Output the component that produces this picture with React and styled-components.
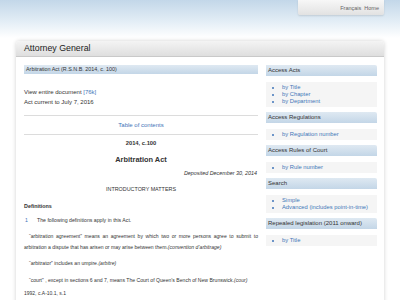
import React from 'react';
import styled, {createGlobalStyle} from 'styled-components';

const Colors = {
    text: '#333',
    link: '#3f75b8',
    rule: '#dcdcdc',
    barTop: '#dfe9f2',
    barBottom: '#c3d6e7',
};

const GlobalStyle = createGlobalStyle`
    html, body {
        margin: 0;
        padding: 0;
    }
    body {
        font-family: "Liberation Sans", Arial, sans-serif;
        color: ${Colors.text};
        background: linear-gradient(#c3d7e9 0, #e4eef6 22px, #ffffff 38px) no-repeat, #fff;
    }
`;

const sidebar = [
    {title: 'Access Acts', links: ['by Title', 'by Chapter', 'by Department']},
    {title: 'Access Regulations', links: ['by Regulation number']},
    {title: 'Access Rules of Court', links: ['by Rule number']},
    {title: 'Search', links: ['Simple', 'Advanced (includes point-in-time)']},
    {title: 'Repealed legislation (2011 onward)', links: ['by Title']},
];

export default function App() {
    return (
        <Page>
            <GlobalStyle />
            <TopBar>
                <LangTab>
                    <TabLink>Français</TabLink>
                    <TabLink>Home</TabLink>
                </LangTab>
            </TopBar>
            <Panel>
                <PanelHeader>Attorney General</PanelHeader>
                <PanelBody>
                    <Main>
                        <Bar>Arbitration Act (R.S.N.B. 2014, c. 100)</Bar>
                        <Meta>
                            <div>View entire document <Link>[76k]</Link></div>
                            <div>Act current to July 7, 2016</div>
                        </Meta>
                        <Toc><Link>Table of contents</Link></Toc>
                        <Chapter>2014, c.100</Chapter>
                        <ActTitle>Arbitration Act</ActTitle>
                        <Deposited>Deposited December 30, 2014</Deposited>
                        <Part>INTRODUCTORY MATTERS</Part>
                        <Heading>Definitions</Heading>
                        <Section><Num>1</Num>The following definitions apply in this Act.</Section>
                        <Para>“arbitration agreement” means an agreement by which two or more persons agree to submit to arbitration a dispute that has arisen or may arise between them.<i>(convention d’arbitrage)</i></Para>
                        <Para>“arbitrator” includes an umpire.<i>(arbitre)</i></Para>
                        <Para>“court” , except in sections 6 and 7, means The Court of Queen’s Bench of New Brunswick.<i>(cour)</i></Para>
                        <Cite>1992, c.A-10.1, s.1</Cite>
                    </Main>
                    <Side>
                        {sidebar.map(box => (
                            <SideBox key={box.title}>
                                <SideBar>{box.title}</SideBar>
                                <SideList>
                                    {box.links.map(l => <li key={l}><Link>{l}</Link></li>)}
                                </SideList>
                            </SideBox>
                        ))}
                    </Side>
                </PanelBody>
            </Panel>
        </Page>
    );
}

const Page = styled.div`
    height: 300px;
    overflow: hidden;
`;

const TopBar = styled.div`
    display: flex;
    justify-content: flex-end;
    padding: 0 16px 0 0;
    height: 41px;
`;

const LangTab = styled.div`
    width: 86px;
    height: 15px;
    display: flex;
    justify-content: flex-end;
    align-items: center;
    gap: 3px;
    padding-right: 5px;
    box-sizing: border-box;
    background: linear-gradient(#f7f7f7, #e2e2e2);
    box-shadow: 0 1px 2px rgba(0, 0, 0, 0.12);
    border-radius: 0 0 2px 2px;
`;

const TabLink = styled.span`
    font-size: 5.5px;
    color: #666;
`;

const Panel = styled.div`
    margin: 0 16px;
    background: #fff;
    border-radius: 4px 4px 0 0;
    box-shadow: 0 0 4px rgba(0, 0, 0, 0.18);
    height: 270px;
`;

const PanelHeader = styled.div`
    height: 15px;
    line-height: 15px;
    padding-left: 8px;
    font-size: 8.8px;
    color: #222;
    background: linear-gradient(#f4f4f4, #dedede);
    border-bottom: 1px solid #c9c9c9;
    border-radius: 4px 4px 0 0;
`;

const PanelBody = styled.div`
    display: grid;
    grid-template-columns: 234px 111px;
    column-gap: 8px;
    padding: 8px 8px 0 8px;
    align-items: start;
`;

const Main = styled.div`
    font-size: 5.6px;
`;

const Bar = styled.div`
    height: 9px;
    line-height: 9px;
    padding-left: 2px;
    font-size: 5.4px;
    background: linear-gradient(${Colors.barTop}, ${Colors.barBottom});
`;

const Link = styled.a`
    color: ${Colors.link};
`;

const Meta = styled.div`
    margin-top: 13px;
    font-size: 6px;
    line-height: 10px;
`;

const Toc = styled.div`
    margin-top: 8px;
    border-top: 1px solid ${Colors.rule};
    border-bottom: 1px solid ${Colors.rule};
    height: 18px;
    line-height: 18px;
    text-align: center;
    font-size: 6px;
`;

const Chapter = styled.div`
    margin-top: 3px;
    line-height: 10px;
    text-align: center;
    font-weight: bold;
    font-size: 5.8px;
`;

const ActTitle = styled.div`
    margin-top: 7px;
    line-height: 10px;
    text-align: center;
    font-weight: bold;
    font-size: 7.4px;
`;

const Deposited = styled.div`
    margin-top: 3px;
    line-height: 10px;
    text-align: right;
    font-style: italic;
    font-size: 5.4px;
    padding-right: 1px;
`;

const Part = styled.div`
    margin-top: 6px;
    line-height: 10px;
    text-align: center;
    font-size: 5.4px;
`;

const Heading = styled.div`
    margin-top: 7px;
    line-height: 10px;
    font-weight: bold;
    font-size: 5.4px;
`;

const Section = styled.div`
    margin-top: 4px;
    line-height: 10px;
    font-size: 5.2px;
`;

const Num = styled.span`
    color: ${Colors.link};
    display: inline-block;
    width: 13px;
    padding-left: 1px;
    box-sizing: border-box;
`;

const Para = styled.p`
    margin: 6px 0 0;
    line-height: 10.5px;
    font-size: 5.1px;
    text-align: justify;
    text-indent: 5px;
`;

const Cite = styled.div`
    margin-top: 3px;
    line-height: 10px;
    font-size: 5px;
`;

const Side = styled.div`
    display: flex;
    flex-direction: column;
    gap: 5px;
    margin-top: 0;
`;

const SideBox = styled.div`
    font-size: 6px;
`;

const SideBar = styled.div`
    height: 11px;
    line-height: 11px;
    padding-left: 2px;
    background: linear-gradient(${Colors.barTop}, ${Colors.barBottom});
    border-radius: 0 2px 0 0;
`;

const SideList = styled.ul`
    margin: 6px 0 0;
    padding: 2px 0 2px 16px;
    background: #f5f5f5;
    line-height: 7px;
    font-size: 5.8px;
    li::marker {
        color: ${Colors.link};
    }
`;
